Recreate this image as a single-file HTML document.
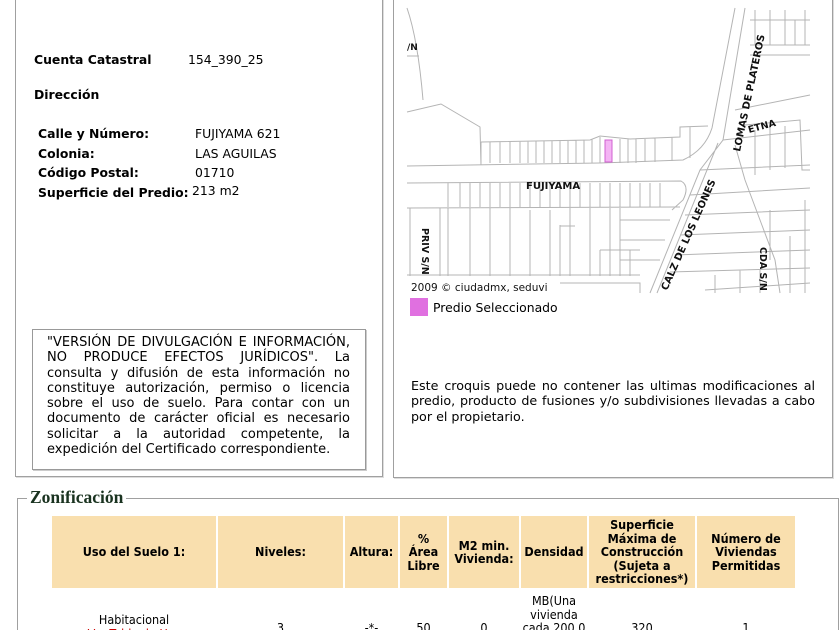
<!DOCTYPE html>
<html><head><meta charset="utf-8"><style>
html,body{margin:0;width:840px;height:630px;overflow:hidden}
body{background:#fff;font-family:"DejaVu Sans",Verdana,sans-serif;color:#000;position:relative}
.a{position:absolute;white-space:nowrap}
.t{font-size:12.4px}
.b{font-weight:bold}
#l{position:absolute;left:15px;top:-5px;width:366px;height:481px;border:1px solid #a0a0a0;border-top:none;box-shadow:1px 1px 0 #ddd}
#r{position:absolute;left:393px;top:-5px;width:438px;height:481px;border:1px solid #a0a0a0;box-shadow:1px 1px 0 #ddd}
#d{position:absolute;left:32px;top:329px;width:303px;height:128px;border:1px solid #999;padding:5px 15px 6px 14px;font-size:13px;line-height:15.3px;text-align:justify;box-shadow:1px 1px 0 #ccc}
#f{position:absolute;left:17px;top:498px;width:820px;height:140px;border:1px solid #a0a0a0}
#lg{position:absolute;left:27px;top:487px;background:#fff;padding:0 3px;font-family:"Liberation Serif",serif;font-weight:bold;font-size:17.5px;color:#1a3320}
th{background:#f9dfae;font-family:"DejaVu Sans Condensed","DejaVu Sans",sans-serif;font-size:12.5px;font-weight:bold;padding:0;height:72px;line-height:13.5px}
table{position:absolute;left:50px;top:514px;border-collapse:separate;border-spacing:2px}
td{font-family:"DejaVu Sans Condensed","DejaVu Sans",sans-serif;font-size:12.5px;text-align:center;line-height:13.5px;vertical-align:top}
</style></head><body>
<div id="l"></div><div id="r"></div>
<div class="a t b" style="left:34px;top:52px">Cuenta Catastral</div>
<div class="a t" style="left:188px;top:52px">154_390_25</div>
<div class="a t b" style="left:34px;top:87px">Dirección</div>
<div class="a t b" style="left:38px;top:124px;line-height:19.5px">Calle y Número:<br>Colonia:<br>Código Postal:<br>Superficie del Predio:</div>
<div class="a t" style="left:195px;top:124px;line-height:19.5px">FUJIYAMA 621<br>LAS AGUILAS<br>01710</div>
<div class="a t" style="left:192px;top:182.5px">213 m2</div>
<div id="d">"VERSIÓN DE DIVULGACIÓN E INFORMACIÓN, NO PRODUCE EFECTOS JURÍDICOS". La consulta y difusión de esta información no constituye autorización, permiso o licencia sobre el uso de suelo. Para contar con un documento de carácter oficial es necesario solicitar a la autoridad competente, la expedición del Certificado correspondiente.</div>

<svg style="position:absolute;left:0;top:0" width="840" height="320">
<g fill="none" stroke="#b4b4b4" stroke-width="1">
<path d="M407 8 Q418 40 423 100 M407 56 L419 56 M407 112 L441 104 L480 127 L481 165 M407 166 L600 163 L683 160 Q705 150 712 128 L735 8 M745 8 L723 140 L700 170 L650 293 M657 293 L718 143"/>
<path d="M481 142 L590 140 L600 136 L630 139 L680 137 L680 127 L708 126 M481 142 L481 163 M490 142V163 M500 142V163 M510 142V163 M520 141V163 M528 141V163 M536 141V163 M544 141V163 M552 141V163 M560 140V163 M568 140V163 M576 140V163 M584 140V163 M592 139V163 M600 137V163 M620 139V163 M628 139V163 M636 139V163 M645 139V162 M655 138V162 M672 137V161 M690 127V158"/>
<path d="M407 183 L681 181 Q690 186 683 200 L672 210 M407 208 L680 207 M448 183V207 M460 183V207 M470 183V207 M480 183V207 M490 183V207 M500 183V207 M510 183V207 M520 183V207 M530 183V207 M540 183V207 M550 183V207 M560 183V207 M570 183V207 M580 183V207 M590 183V207 M600 183V207 M610 183V207 M620 183V207 M630 183V207 M640 183V207 M650 183V207 M660 183V207"/>
<path d="M410 208V276 M440 208V276 M448 208V276 M470 208V276 M490 208V276 M510 208V276 M530 210V276 M550 210V276 M560 225V276 M570 208V276 M590 208V276 M600 250V276 M610 208V276 M620 250V276 M630 250V276 M600 250H640 M620 208V250 M620 220H670 M620 240H665 M620 260H660 M560 226H575 M407 275H640 M560 283H640 L640 293"/>
<path d="M735 110 L810 95 M723 140 L810 130 M745 125 L800 120 L802 170 L810 170 M735 145 L745 180 L760 220 L775 260 L780 293 M755 130V175 M770 128V170 M785 126V168 M700 170 L810 165 M690 195 L810 188 M685 215 L810 210 M680 235 L810 230 M675 255 L810 250 M670 272 L810 268 M705 290 L810 283 M770 210 V260 M790 236 V293 M805 200V293 M715 275V293 M740 270V293 M760 270V293 M795 20V45 M755 10V45 M770 10V45 M785 10V45 M805 10V45 M750 20H810 M750 45H810 M750 55H810"/>
</g>
<rect x="605" y="140" width="7" height="22" fill="#f4b4f4" stroke="#d060d0" stroke-width="1"/>
<g font-family="DejaVu Sans,sans-serif" font-size="10" font-weight="bold" fill="#111">
<text x="407" y="50" font-size="9">/N</text>
<text x="526" y="189" font-size="10">FUJIYAMA</text>
<text x="0" y="0" font-size="9.5" transform="translate(422,228) rotate(90)">PRIV S/N</text>
<text x="0" y="0" font-size="9.5" transform="translate(760,247) rotate(90)">CDA S/N</text>
<text x="0" y="0" font-size="9.5" transform="translate(749,133) rotate(-15)">ETNA</text>
<text x="0" y="0" font-size="10" transform="translate(667,291) rotate(-66)">CALZ DE LOS LEONES</text>
<text x="0" y="0" font-size="10" transform="translate(740,152) rotate(-78)">LOMAS DE PLATEROS</text>
</g>
<text x="411" y="291" font-family="DejaVu Sans,sans-serif" font-size="10.5" fill="#111">2009 © ciudadmx, seduvi</text>
<rect x="410" y="298" width="18" height="18" fill="#e070e0"/>
</svg>
<div class="a t" style="left:433px;top:300px">Predio Seleccionado</div>
<div class="a" style="left:411px;top:378px;width:404px;font-size:12.7px;line-height:15.4px;white-space:normal;text-align:justify">Este croquis puede no contener las ultimas modificaciones al predio, producto de fusiones y/o subdivisiones llevadas a cabo por el propietario.</div>

<div id="f"></div>
<div id="lg">Zonificación</div>
<table>
<tr><th style="width:164px">Uso del Suelo 1:</th><th style="width:125px">Niveles:</th><th style="width:53px">Altura:</th><th style="width:47px">%<br>Área<br>Libre</th><th style="width:70px">M2 min.<br>Vivienda:</th><th style="width:66px">Densidad</th><th style="width:106px">Superficie<br>Máxima de<br>Construcción<br>(Sujeta a<br>restricciones*)</th><th style="width:98px">Número de<br>Viviendas<br>Permitidas</th></tr>
<tr><td style="padding-top:23px">Habitacional<br><span style="color:#c00">Ver Tabla de Uso</span></td><td style="padding-top:31px">3</td><td style="padding-top:31px">-*-</td><td style="padding-top:31px">50</td><td style="padding-top:31px">0</td><td style="padding-top:4px">MB(Una<br>vivienda<br>cada 200.0</td><td style="padding-top:31px">320</td><td style="padding-top:31px">1</td></tr>
</table>
</body></html>
